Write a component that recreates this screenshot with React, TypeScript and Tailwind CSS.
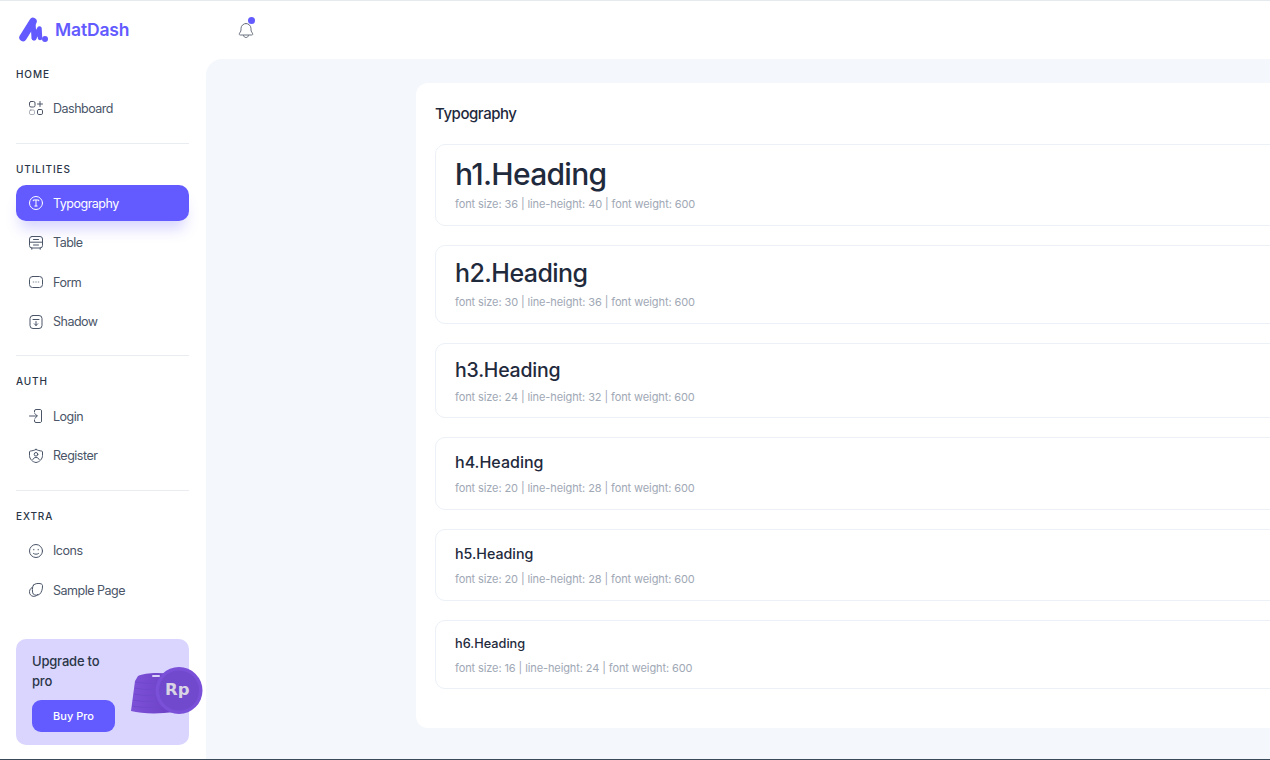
import React from "react";

const P = "#635bff";

function Ic({ children }: { children: React.ReactNode }) {
  return (
    <svg width="16" height="16" viewBox="0 0 16 16" fill="none" stroke="currentColor" strokeWidth="1" strokeLinecap="round" strokeLinejoin="round" className="shrink-0">
      {children}
    </svg>
  );
}

const icons: Record<string, React.ReactNode> = {
  Dashboard: (
    <Ic>
      <rect x="1.5" y="1.5" width="5.500" height="5.500" rx="1.500" />
      <rect x="1.500" y="10" width="5" height="4.500" rx="1.300" opacity="0.45" />
      <rect x="9.500" y="9.500" width="5" height="5" rx="1.300" />
      <path d="M12 1.500v5M9.500 4h5" />
    </Ic>
  ),
  Typography: (
    <Ic>
      <circle cx="8" cy="8" r="6.500" />
      <path d="M5.300 5.800V5h5.400v.8M8 5v6M6.800 11h2.400" />
    </Ic>
  ),
  Table: (
    <Ic>
      <rect x="1.500" y="1.500" width="13" height="11.500" rx="2.500" />
      <path d="M1.500 7.200h13M5.500 4.500h5M5.500 10h5M3.800 13v1.300M12.200 13v1.300" />
    </Ic>
  ),
  Form: (
    <Ic>
      <rect x="1.500" y="2.500" width="13" height="11" rx="3" />
      <path d="M5.200 8h.6M7.700 8h.6M10.200 8h.6" opacity="0.7" />
    </Ic>
  ),
  Shadow: (
    <Ic>
      <rect x="2" y="1.500" width="12" height="13" rx="3" />
      <path d="M5 5.500h6M8 7.500v4M6.300 9.800 8 11.500l1.700-1.700" />
    </Ic>
  ),
  Login: (
    <Ic>
      <path d="M6.500 4V3a1.500 1.500 0 0 1 1.500-1.500h4.500a1.500 1.500 0 0 1 1 1.500v10a1.500 1.500 0 0 1-1 1.500H8A1.500 1.500 0 0 1 6.500 13v-1" />
      <path d="M1.500 8h7.500M6.800 5.500 9.300 8l-2.500 2.500" />
    </Ic>
  ),
  Register: (
    <Ic>
      <path d="M8 1.500c2 1 3.800 1.300 5.500 1.500.6 0 1 .5 1 1v3.500c0 3.500-3 6.500-6.500 7-3.500-.5-6.500-3.500-6.500-7V4c0-.5.4-1 1-1C4.200 2.800 6 2.500 8 1.500Z" />
      <circle cx="8" cy="6.300" r="1.800" />
      <path d="M4.800 11.500c.5-1.300 1.700-2 3.200-2s2.700.7 3.200 2" />
    </Ic>
  ),
  Icons: (
    <Ic>
      <circle cx="8" cy="8" r="6.500" />
      <path d="M5.500 10.500c1.500 1 3.500 1 5 0M5.800 6.300v.6M10.200 6.300v.6" />
    </Ic>
  ),
  "Sample Page": (
    <Ic>
      <path d="M5.500 3c1.500-1.500 5-2 7.500-1.200 1 .4 1.500 1 1.500 2 .2 3-1 7-3 8.500-2 1.500-5 1-6.300-.3C4 10.500 4 4.500 5.500 3Z" />
      <path d="M4 5.500C2 6.500 1 9 1.700 11.500c.6 2 3 3.300 5 2.800 1.500-.3 2.500-1 3-2" />
    </Ic>
  ),
};

function Item({ label, active }: { label: string; active?: boolean }) {
  return (
    <div
      className={
        active
          ? "flex h-[36px] items-center gap-[9px] rounded-[10px] bg-[#635bff] pl-[12px] text-white shadow-[0_12px_14px_-4px_rgba(99,91,255,0.25)]"
          : "flex h-[36px] items-center gap-[9px] rounded-[10px] pl-[12px] text-[#4a5568]"
      }
    >
      {icons[label]}
      <span className="pt-[2px] text-[12.500px] tracking-[-0.5px]">{label}</span>
    </div>
  );
}

function Section({ title, items, active, listCls }: { title: string; items: string[]; active?: string; listCls: string }) {
  return (
    <div>
      <div className="h-[20px] text-[10px] leading-[20px] font-medium tracking-[0.9px] text-[#2a3547]">{title}</div>
      <div className={`flex flex-col gap-[3.500px] ${listCls}`}>
        {items.map((i) => (
          <Item key={i} label={i} active={i === active} />
        ))}
      </div>
    </div>
  );
}

function Row({ heading, cls, meta, padCls }: { heading: string; cls: string; meta: string; padCls: string }) {
  return (
    <div className={`rounded-[10px] border border-[#ebf1f6] px-[19px] pt-[9px] ${padCls}`}>
      <div className={`font-medium text-[#1f2a3d] ${cls}`}>{heading}</div>
      <div className="text-[11px] leading-[20px] tracking-[-0.1px] text-[#a0a8b5]">{meta}</div>
    </div>
  );
}

function Coin() {
  return (
    <div className="absolute left-[130px] top-[665px] h-[50px] w-[74px]">
      <svg width="74" height="50" viewBox="0 0 74 50">
        <defs>
          <linearGradient id="stack" x1="0" x2="1" y1="0" y2="0">
            <stop offset="0" stopColor="#7d52d8" />
            <stop offset="1" stopColor="#6a3fc4" />
          </linearGradient>
        </defs>
        <path d="M8 10c6-3 20-4 32-2l4 38c-14 2-32 2-43-1L5 15Z" fill="url(#stack)" />
        <path d="M6 16c10 2 22 2 30 0M5 22c10 2 22 2 30 0M4 28c10 2 22 2 30 0M3 34c10 2 22 2 30 0M2 40c10 2 22 2 30 0" stroke="#7048cc" strokeWidth="1" fill="none" />
        <rect x="22" y="9" width="8" height="2" rx="1" fill="#d9d2f8" />
        <circle cx="49" cy="24.500" r="23.500" fill="#7a50d8" />
        <circle cx="49" cy="24.500" r="20" fill="#7049cc" />
      </svg>
      <span className="absolute left-[35px] top-[14px] font-['DejaVu_Sans',sans-serif] text-[16.500px] leading-[20px] font-bold text-[#d8d4e4]">Rp</span>
    </div>
  );
}

export default function App() {
  return (
    <div className="relative flex h-[760px] w-[1270px] overflow-hidden border-t border-b border-t-[#e5eaef] border-b-[#3a4a5a] bg-white font-['Inter',sans-serif]">
      <aside className="flex w-[206px] shrink-0 flex-col pl-[16px]">
        <div className="flex h-[58px] items-center gap-[4px] pl-[3px]">
          <svg width="32" height="28" viewBox="0 0 32 28" fill="none" stroke={P} strokeLinecap="round" strokeLinejoin="round" className="shrink-0">
            <path d="M4 21.500 14 5.500" strokeWidth="7.500" />
            <path d="M14 6 15 22" strokeWidth="5" />
            <path d="M15 22 20.500 12.500 21 22" strokeWidth="4.500" />
            <circle cx="26" cy="23" r="3" fill={P} stroke="none" />
          </svg>
          <span className="text-[17.500px] font-semibold tracking-[-0.15px] text-[#635bff]">MatDash</span>
        </div>
        <div className="w-[173px]">
          <div className="mt-[5px]">
            <Section title="HOME" items={["Dashboard"]} listCls="mt-[6px]" />
          </div>
          <div className="mb-[15px] mt-[17px] h-px bg-[#e9edf2]" />
          <Section title="UTILITIES" items={["Typography", "Table", "Form", "Shadow"]} active="Typography" listCls="mt-[6px]" />
          <div className="mb-[15px] mt-[15.750px] h-px bg-[#e9edf2]" />
          <Section title="AUTH" items={["Login", "Register"]} listCls="mt-[7px]" />
          <div className="mb-[15px] mt-[15.750px] h-px bg-[#e9edf2]" />
          <Section title="EXTRA" items={["Icons", "Sample Page"]} listCls="mt-[7px]" />
          <div className="mt-[31.250px] h-[106px] rounded-[10px] bg-[#d9d5ff] pl-[16px] pt-[12px]">
            <div className="w-[84px] text-[13px] leading-[20px] font-medium tracking-[-0.2px] text-[#2a3547]">Upgrade to pro</div>
            <div className="mt-[9px] flex h-[32px] w-[83px] items-center justify-center rounded-[9px] bg-[#635bff] text-[11px] font-medium text-white">Buy Pro</div>
          </div>
        </div>
      </aside>
      <Coin />
      <main className="flex min-w-0 flex-1 flex-col">
        <header className="flex h-[57.500px] shrink-0 items-start pl-[31px] pt-[18px]">
          <div className="relative h-[20px] w-[20px] text-[#6b7280]">
            <svg width="18" height="18" viewBox="0 0 18 18" fill="none" stroke="currentColor" strokeWidth="1" strokeLinecap="round" strokeLinejoin="round" className="mt-[2px]">
              <path d="M9 2.500a5 5 0 0 0-5 5v1.500c0 1.500-1.200 2.500-1.700 3.800-.3.800.3 1.200 1 1.200h11.400c.7 0 1.300-.4 1-1.200C15.200 11.500 14 10.500 14 9V7.500a5 5 0 0 0-5-5Z" />
              <path d="M6.500 14.500c.3 1.300 1.300 2 2.500 2s2.200-.7 2.500-2" />
            </svg>
            <span className="absolute left-[11px] top-[-2.500px] h-[7px] w-[7px] rounded-full bg-[#635bff]" />
          </div>
        </header>
        <div className="flex-1 overflow-hidden rounded-tl-[16px] bg-[#f4f7fb] pl-[210px] pt-[24px]">
          <div className="h-[645px] w-[1000px] rounded-l-[12px] bg-white pl-[19px] pr-[20px] pt-[20px]">
            <div className="text-[15px] leading-[22px] font-medium tracking-[-0.45px] text-[#1f2a3d]">Typography</div>
            <div className="mt-[19px] flex flex-col gap-[19px]">
              <Row heading="h1.Heading" padCls="pb-[11px]" cls="text-[30px] tracking-[-0.7px] leading-[40px]" meta="font size: 36 | line-height: 40 | font weight: 600" />
              <Row heading="h2.Heading" padCls="pb-[11px]" cls="text-[25px] tracking-[-0.55px] leading-[37px]" meta="font size: 30 | line-height: 36 | font weight: 600" />
              <Row heading="h3.Heading" padCls="pb-[10px]" cls="text-[19.500px] tracking-[-0.2px] leading-[34px]" meta="font size: 24 | line-height: 32 | font weight: 600" />
              <Row heading="h4.Heading" padCls="pb-[11px]" cls="text-[16px] leading-[31px]" meta="font size: 20 | line-height: 28 | font weight: 600" />
              <Row heading="h5.Heading" padCls="pb-[11px]" cls="text-[14.250px] leading-[30px]" meta="font size: 20 | line-height: 28 | font weight: 600" />
              <Row heading="h6.Heading" padCls="pb-[10px]" cls="text-[12.750px] leading-[28px]" meta="font size: 16 | line-height: 24 | font weight: 600" />
            </div>
          </div>
        </div>
      </main>
    </div>
  );
}
